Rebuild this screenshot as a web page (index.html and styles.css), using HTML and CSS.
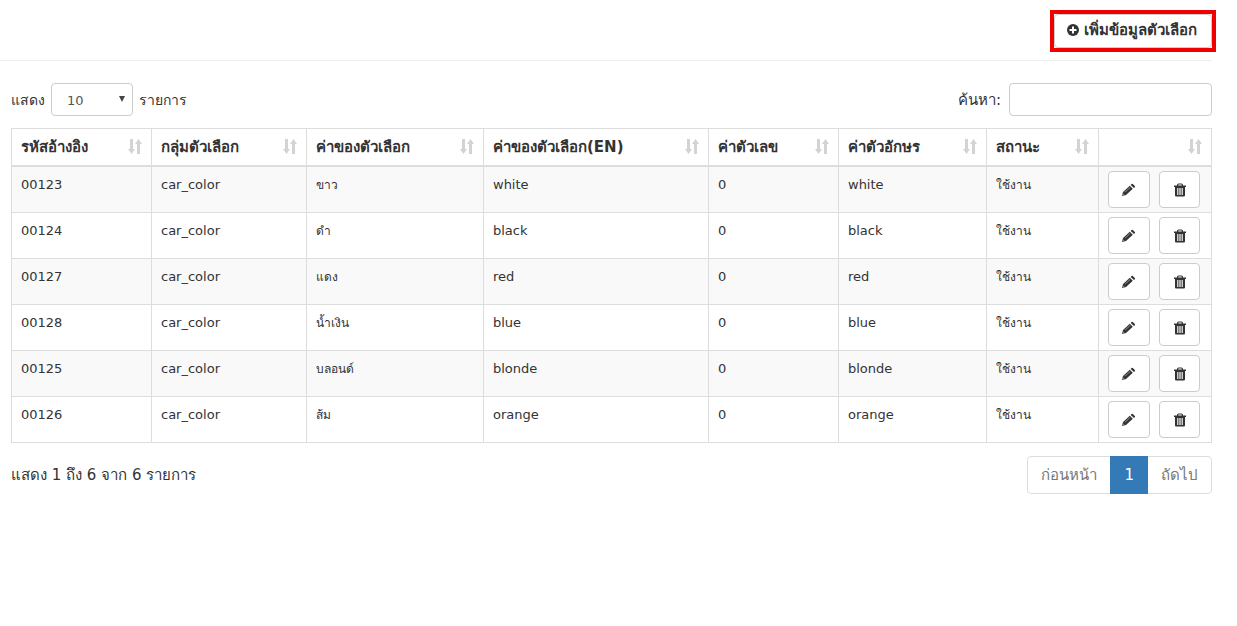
FILE: index.html
```html
<!DOCTYPE html>
<html lang="th">
<head>
    <meta charset="UTF-8">
    <meta name="viewport" content="width=device-width, initial-scale=1.0">
    <title>ข้อมูลตัวเลือก</title>
    <link rel="stylesheet" href="styles.css">
</head>
<body>
    <svg class="sprite" aria-hidden="true">
        <symbol id="sort" viewBox="0 0 14 16">
            <path d="M2 0h3v10h2l-3.500 5L0 10h2zM9 15h3V5h2l-3.500-5L7 5h2z"/>
        </symbol>
        <symbol id="pencil" viewBox="0 0 14 14">
            <path d="M0 13l1-4 6.800-6.300 3 3L4 12zM8.700 1.900l.8-.8q.7-.5 1.300 0l2 2q.5.600 0 1.200l-.8.8z"/>
            <path class="shade" d="M2.600 8.800l5.200-4.800.7.700-5.200 4.800z"/>
            <path class="cut" d="M1.400 10.500l1 1-1 .3z"/>
        </symbol>
        <symbol id="trash" viewBox="0 0 12 14">
            <path d="M3 2.500V2q0-1.500 1.500-1.500h3Q9 .5 9 2v.5h3V4H0V2.500zM4.300 2.500h3.400v-1H4.300zM1 4h10v8.500q0 1-1 1H2q-1 0-1-1z"/>
            <path class="slot" d="M3 5h1.500v7H3zM5.200 5h1.600v7H5.200zM7.500 5H9v7H7.500z"/>
        </symbol>
    </svg>

    <header class="page-header">
        <div class="highlight">
            <button type="button" class="btn btn-add">
                <svg width="12" height="12" viewBox="0 0 12 12" aria-hidden="true">
                    <circle cx="6" cy="6" r="6"/>
                    <path class="cut" d="M5 2.500h2V5h2.500v2H7v2.500H5V7H2.500V5H5z"/>
                </svg>
                เพิ่มข้อมูลตัวเลือก
            </button>
        </div>
    </header>

    <main class="content">
        <div class="toolbar">
            <label class="length">แสดง
                <select name="length">
                    <option>10</option>
                    <option>25</option>
                    <option>50</option>
                    <option>100</option>
                </select>
                รายการ
            </label>
            <label class="search">ค้นหา:
                <input type="search" name="search">
            </label>
        </div>

        <table class="table">
            <colgroup>
                <col class="col-id">
                <col class="col-group">
                <col class="col-value">
                <col class="col-value-en">
                <col class="col-number">
                <col class="col-char">
                <col class="col-status">
                <col class="col-action">
            </colgroup>
            <thead>
                <tr>
                    <th><div class="th">รหัสอ้างอิง<svg class="sort"><use href="#sort"/></svg></div></th>
                    <th><div class="th">กลุ่มตัวเลือก<svg class="sort"><use href="#sort"/></svg></div></th>
                    <th><div class="th">ค่าของตัวเลือก<svg class="sort"><use href="#sort"/></svg></div></th>
                    <th><div class="th">ค่าของตัวเลือก(EN)<svg class="sort"><use href="#sort"/></svg></div></th>
                    <th><div class="th">ค่าตัวเลข<svg class="sort"><use href="#sort"/></svg></div></th>
                    <th><div class="th">ค่าตัวอักษร<svg class="sort"><use href="#sort"/></svg></div></th>
                    <th><div class="th">สถานะ<svg class="sort"><use href="#sort"/></svg></div></th>
                    <th><div class="th"><svg class="sort"><use href="#sort"/></svg></div></th>
                </tr>
            </thead>
            <tbody>
                <tr>
                    <td>00123</td><td>car_color</td><td class="thai">ขาว</td><td>white</td><td>0</td><td>white</td><td class="thai">ใช้งาน</td>
                    <td class="actions"><div class="btn-row">
                        <button type="button" class="btn btn-icon" aria-label="แก้ไข"><svg width="14" height="14"><use href="#pencil"/></svg></button>
                        <button type="button" class="btn btn-icon btn-delete" aria-label="ลบ"><svg width="12" height="14"><use href="#trash"/></svg></button>
                    </div></td>
                </tr>
                <tr>
                    <td>00124</td><td>car_color</td><td class="thai">ดำ</td><td>black</td><td>0</td><td>black</td><td class="thai">ใช้งาน</td>
                    <td class="actions"><div class="btn-row">
                        <button type="button" class="btn btn-icon" aria-label="แก้ไข"><svg width="14" height="14"><use href="#pencil"/></svg></button>
                        <button type="button" class="btn btn-icon btn-delete" aria-label="ลบ"><svg width="12" height="14"><use href="#trash"/></svg></button>
                    </div></td>
                </tr>
                <tr>
                    <td>00127</td><td>car_color</td><td class="thai">แดง</td><td>red</td><td>0</td><td>red</td><td class="thai">ใช้งาน</td>
                    <td class="actions"><div class="btn-row">
                        <button type="button" class="btn btn-icon" aria-label="แก้ไข"><svg width="14" height="14"><use href="#pencil"/></svg></button>
                        <button type="button" class="btn btn-icon btn-delete" aria-label="ลบ"><svg width="12" height="14"><use href="#trash"/></svg></button>
                    </div></td>
                </tr>
                <tr>
                    <td>00128</td><td>car_color</td><td class="thai">น้ำเงิน</td><td>blue</td><td>0</td><td>blue</td><td class="thai">ใช้งาน</td>
                    <td class="actions"><div class="btn-row">
                        <button type="button" class="btn btn-icon" aria-label="แก้ไข"><svg width="14" height="14"><use href="#pencil"/></svg></button>
                        <button type="button" class="btn btn-icon btn-delete" aria-label="ลบ"><svg width="12" height="14"><use href="#trash"/></svg></button>
                    </div></td>
                </tr>
                <tr>
                    <td>00125</td><td>car_color</td><td class="thai">บลอนด์</td><td>blonde</td><td>0</td><td>blonde</td><td class="thai">ใช้งาน</td>
                    <td class="actions"><div class="btn-row">
                        <button type="button" class="btn btn-icon" aria-label="แก้ไข"><svg width="14" height="14"><use href="#pencil"/></svg></button>
                        <button type="button" class="btn btn-icon btn-delete" aria-label="ลบ"><svg width="12" height="14"><use href="#trash"/></svg></button>
                    </div></td>
                </tr>
                <tr>
                    <td>00126</td><td>car_color</td><td class="thai">ส้ม</td><td>orange</td><td>0</td><td>orange</td><td class="thai">ใช้งาน</td>
                    <td class="actions"><div class="btn-row">
                        <button type="button" class="btn btn-icon" aria-label="แก้ไข"><svg width="14" height="14"><use href="#pencil"/></svg></button>
                        <button type="button" class="btn btn-icon btn-delete" aria-label="ลบ"><svg width="12" height="14"><use href="#trash"/></svg></button>
                    </div></td>
                </tr>
            </tbody>
        </table>

        <div class="table-footer">
            <div class="info">แสดง 1 ถึง 6 จาก 6 รายการ</div>
            <nav class="pagination">
                <a href="#">ก่อนหน้า</a>
                <a href="#" class="active">1</a>
                <a href="#">ถัดไป</a>
            </nav>
        </div>
    </main>
</body>
</html>
```
FILE: styles.css
```css
* {
    box-sizing: border-box;
}
body {
    margin: 0;
    background: #fff;
    color: #333;
    font-family: Verdana, "DejaVu Sans", sans-serif;
    font-size: 14px;
    line-height: 20px;
}
svg {
    fill: #333;
}
.cut {
    fill: #fff;
}
.shade {
    fill: #777;
}
.slot {
    fill: #ccc;
}
.sprite {
    display: none;
}
.page-header {
    display: flex;
    justify-content: flex-end;
    margin-right: 25px;
    padding: 10px 0 8px;
    border-bottom: 1px solid #eee;
}
.highlight {
    margin-right: -4px;
    border: 4px solid #f00000;
}
.btn {
    display: flex;
    align-items: center;
    justify-content: center;
    background: #fff;
    border: 1px solid #ccc;
    border-radius: 4px;
    color: #333;
    font-family: inherit;
}
.btn-add {
    gap: 5px;
    width: 158px;
    height: 34px;
    padding: 0 3px 2px 0;
    font-size: 15px;
    font-weight: bold;
    white-space: nowrap;
}
.content {
    padding: 22px 25px 0 11px;
}
.toolbar {
    display: flex;
    justify-content: space-between;
    margin-bottom: 12px;
}
.toolbar label {
    display: flex;
    align-items: center;
    gap: 6px;
}
.toolbar .search {
    gap: 8px;
    font-size: 15px;
}
select,
input {
    height: 33px;
    background: #fff;
    border: 1px solid #ccc;
    border-radius: 4px;
    color: #555;
    font-family: inherit;
    font-size: 13px;
}
select {
    width: 82px;
    padding: 1px 15px 0;
    appearance: none;
    background: #fff url("data:image/svg+xml,%3Csvg xmlns='http://www.w3.org/2000/svg' width='6' height='6'%3E%3Cpath d='M0 0h6L3 6z' fill='%23444'/%3E%3C/svg%3E") no-repeat right 7px top 12px;
}
input {
    width: 203px;
    padding: 0 10px;
}
.table {
    width: 100%;
    table-layout: fixed;
    border-collapse: collapse;
    font-size: 13px;
}
.table th,
.table td {
    border: 1px solid #ddd;
    text-align: left;
    vertical-align: top;
}
.table th {
    padding: 8px 9px;
    border-bottom-width: 2px;
    font-size: 15px;
    white-space: nowrap;
}
.table td {
    height: 46px;
    padding: 8px 9px;
}
.table .thai {
    font-size: 12px;
}
.table tbody tr:nth-child(odd) {
    background: #f9f9f9;
}
.th {
    display: flex;
    align-items: center;
    justify-content: space-between;
    height: 20px;
}
.sort {
    width: 14px;
    height: 16px;
    margin-left: auto;
    fill: #d3d3d3;
}
.col-id { width: 140px; }
.col-group { width: 155px; }
.col-value { width: 177px; }
.col-value-en { width: 225px; }
.col-number { width: 130px; }
.col-char { width: 148px; }
.col-status { width: 112px; }
.col-action { width: 113px; }
.table .actions {
    padding: 4px 9px;
}
.btn-row {
    display: flex;
    gap: 9px;
}
.btn-icon {
    width: 42px;
    height: 37px;
    padding: 0;
}
.btn-delete {
    width: 41px;
}
.table-footer {
    display: flex;
    justify-content: space-between;
    padding-top: 13px;
    font-size: 15px;
}
.info {
    padding-top: 9px;
}
.pagination {
    display: flex;
    height: 38px;
    border: 1px solid #ddd;
    border-radius: 4px;
}
.pagination a {
    padding: 8px 13px;
    color: #777;
    text-decoration: none;
}
.pagination .active {
    margin: -1px 0;
    padding: 9px 14px;
    background: #337ab7;
    color: #fff;
}
```
